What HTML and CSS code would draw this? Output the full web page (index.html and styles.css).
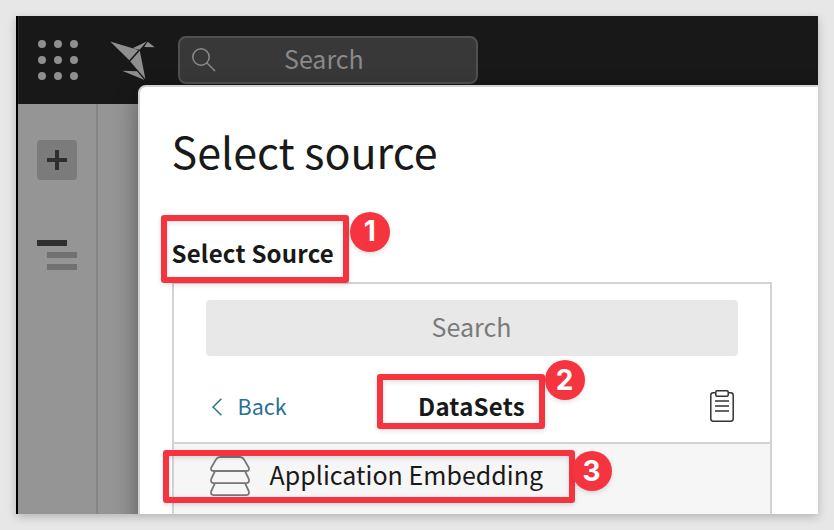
FILE: index.html
```html
<!DOCTYPE html>
<html lang="en">
<head>
<meta charset="utf-8">
<title>Select source</title>
<link rel="stylesheet" href="styles.css">
</head>
<body>
<main class="window">
  <header class="topbar">
    <svg class="apps" viewBox="0 0 40 40" width="40" height="40" fill="#8f8f8f">
      <circle cx="4" cy="4" r="4"/><circle cx="20" cy="4" r="4"/><circle cx="36" cy="4" r="4"/>
      <circle cx="4" cy="20" r="4"/><circle cx="20" cy="20" r="4"/><circle cx="36" cy="20" r="4"/>
      <circle cx="4" cy="36" r="4"/><circle cx="20" cy="36" r="4"/><circle cx="36" cy="36" r="4"/>
    </svg>
    <svg class="bird" viewBox="0 0 46 40" width="46" height="40" fill="#8f8f8f">
      <path d="M.2 .6L28.4 9L19.3 19.2Z"/>
      <path d="M22.6 7.2L36.8 .4L29.6 8.8Z"/>
      <path d="M37.6 .8L44.8 6.2L34.2 6Z"/>
      <path d="M29.8 9.8L35.4 38L20.2 20.4Z"/>
      <path d="M12.2 29.8L27 30.2L34.4 39Z"/>
    </svg>
    <div class="topsearch">
      <svg viewBox="0 0 24 24" width="24" height="24" fill="none" stroke="#8b8b8b" stroke-width="1.5"><circle cx="9" cy="9" r="8.2"/><path d="M15 15L23 23"/></svg>
      <span>Search</span>
    </div>
  </header>
  <div class="workspace">
    <nav class="rail">
      <div class="add"><svg viewBox="0 0 20 20" width="20" height="20" fill="#2f2f2f"><path d="M8 0h4v8h8v4h-8v8H8v-8H0V8h8z"/></svg></div>
      <svg class="tree" viewBox="0 0 40 30" width="40" height="30"><path fill="#2f2f2f" d="M0 0h30v6H0z"/><path fill="#717171" d="M10 12h30v6H10zM10 24h30v6H10z"/></svg>
    </nav>
  </div>
  <section class="dialog">
    <h1>Select source</h1>
    <h2>Select Source</h2>
    <div class="picker">
      <div class="filter">Search</div>
      <div class="crumbs">
        <a class="back"><svg viewBox="0 0 10 18" width="10" height="18" fill="none" stroke="#2a6f94" stroke-width="1.5"><path d="M9.4 .7L1 9L9.4 17.3"/></svg><span>Back</span></a>
        <strong>DataSets</strong>
        <svg class="clip" viewBox="0 0 24 32" width="24" height="32" fill="none" stroke="#333" stroke-width="1.5"><path d="M5.5 2.8H3.2Q.8 2.8 .8 5.2V28.8Q.8 31.2 3.2 31.2H20.8Q23.2 31.2 23.2 28.8V5.2Q23.2 2.8 20.8 2.8H18.5"/><rect x="5.8" y=".8" width="12.4" height="5.4" rx="1.2"/><path d="M5 11h14M5 16h14M5 21h14"/></svg>
      </div>
      <div class="item">
        <svg class="stack" viewBox="0 0 40 42" width="40" height="42" fill="none" stroke="#777" stroke-width="1.8" stroke-linejoin="round">
          <path d="M10 1H30Q32.5 1 34 3.4L38.7 11.5Q39.8 14.6 36.5 15H3.5Q.2 14.6 1.3 11.5L6 3.4Q7.5 1 10 1Z"/>
          <path d="M5 15L1.3 22.8Q.2 26.6 3.5 27.2H36.5Q39.8 26.6 38.7 22.8L35 15"/>
          <path d="M5 27.2L1.3 35Q.2 38.8 3.5 39.2H36.5Q39.8 38.8 38.7 35L35 27.2"/>
        </svg>
        <span>Application Embedding</span>
      </div>
    </div>
  </section>
</main>
<div class="mark mark-1"></div><div class="num num-1">1</div>
<div class="mark mark-2"></div><div class="num num-2">2</div>
<div class="mark mark-3"></div><div class="num num-3">3</div>
</body>
</html>
```
FILE: styles.css
```css
* { box-sizing: border-box; }
body {
  margin: 0; padding: 16px; width: 834px; height: 530px; overflow: hidden; position: relative;
  background: #e7e7e7; color: #191919;
  font-family: "Noto Sans CJK SC", "Noto Sans", sans-serif;
}
svg { display: block; flex: none; }
.window {
  position: relative; width: 802px; height: 498px; overflow: hidden;
  display: flex; flex-direction: column;
  border-left: 2px solid #000; background: #959595;
}
body::before {
  content: ""; position: absolute; left: 16px; top: 16px; width: 802px; height: 498px;
  box-shadow: 0 3px 9px rgba(0,0,0,.22);
}
.topbar {
  height: 88px; flex: none; display: flex; align-items: center;
  padding-left: 19px; background: #181818; border-left: 1px solid #292929;
}
.bird { margin-left: 32px; margin-top: 1px; }
.topsearch {
  width: 300px; height: 48px; margin-left: 22px;
  display: flex; align-items: center; padding-left: 12px;
  border: 2px solid #505050; border-radius: 8px; background: #383838;
}
.topsearch span { margin: 0 0 4px 68px; font-size: 25px; line-height: 36px; color: #898989; }
.workspace { flex: 1; display: flex; }
.rail { width: 80px; border-right: 2px solid #868686; padding: 36px 0 0 19px; }
.add {
  width: 40px; height: 40px; display: flex; align-items: center; justify-content: center;
  border-radius: 4px; background: #7b7b7b;
}
.tree { margin-top: 60px; }
.dialog {
  position: absolute; left: 120px; top: 69px; width: 700px; height: 460px;
  padding-left: 32px; border: 2px solid #d3d3d3; border-radius: 8px 0 0 0; background: #fff;
  box-shadow: 0 10px 24px rgba(0,0,0,.4);
}
h1 { margin: 33px 0 0 -.5px; font-size: 43px; line-height: 60px; font-weight: 400; }
h2 { margin: 55px 0 0 -.5px; font-size: 24px; line-height: 36px; font-weight: 700; letter-spacing: .22px; }
.picker { width: 600px; height: 280px; margin-top: 11px; border: 2px solid #d3d3d3; padding-top: 16px; }
.filter {
  width: 532px; height: 56px; margin: 0 auto; border-radius: 4px; background: #e8e8e8;
  font-size: 25px; line-height: 52px; text-align: center; text-indent: -1px; color: #7a7a7a;
}
.crumbs { height: 88px; display: flex; align-items: center; padding: 14px 36px 0 38px; border-bottom: 2px solid #d3d3d3; }
.back { display: flex; align-items: center; gap: 16px; width: 206px; color: #2a6f94; font-size: 21.5px; line-height: 32px; }
.back svg { margin-top: 1px; }
.back span { margin: -1px 0 0 -.5px; }
.crumbs strong { flex: 1; font-size: 24px; line-height: 36px; letter-spacing: .25px; }
.item { height: 100px; display: flex; align-items: flex-start; padding: 12px 0 0 36px; background: #f6f6f6; }
.item span { margin: -1px 0 0 19.5px; font-size: 25px; line-height: 38px; letter-spacing: .03px; }
.mark { position: absolute; border: 6px solid #f63440; border-radius: 3px; box-shadow: 0 2px 5px rgba(0,0,0,.12), inset 0 2px 5px rgba(0,0,0,.12); }
.mark-1 { left: 160.5px; top: 215px; width: 188.5px; height: 68px; }
.mark-2 { left: 377px; top: 374px; width: 168px; height: 55px; }
.mark-3 { left: 162.5px; top: 450px; width: 412.5px; height: 53px; }
.num {
  position: absolute; width: 40px; height: 40px; border-radius: 50%; background: #f63440; color: #fff;
  font: 700 28px/40px Inter, sans-serif; text-align: center; box-shadow: 0 2px 5px rgba(0,0,0,.12);
}
.num-1 { left: 349.8px; top: 212px; line-height: 39px; }
.num-2 { left: 544.6px; top: 360px; }
.num-3 { left: 571.6px; top: 451.3px; }
```
